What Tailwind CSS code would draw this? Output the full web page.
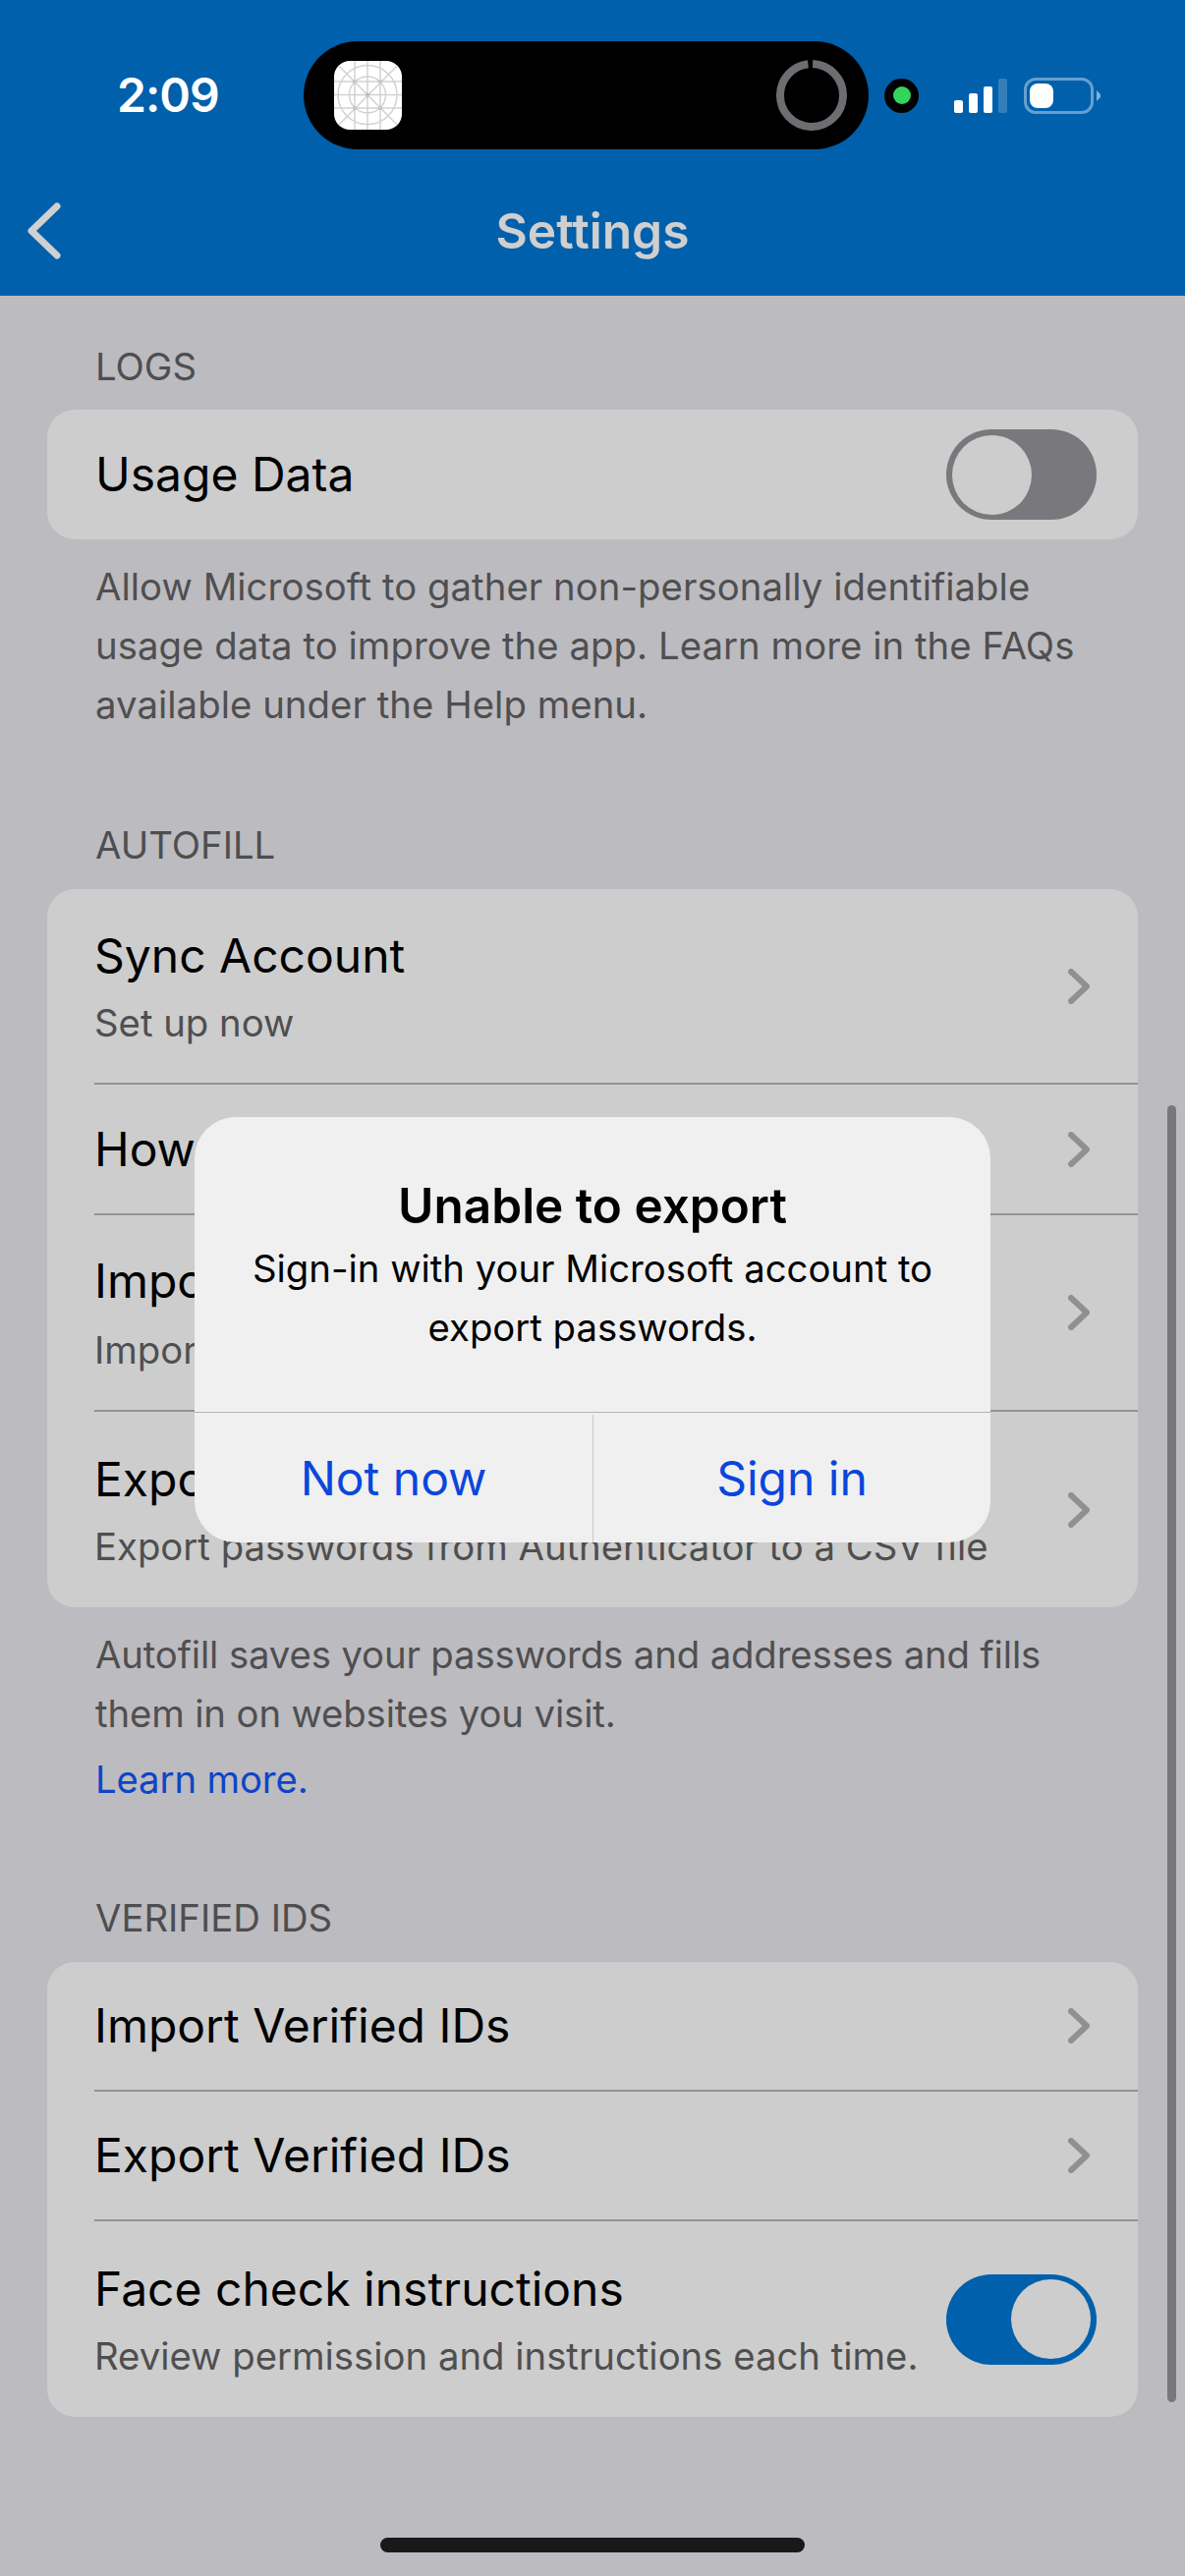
<!DOCTYPE html>
<html lang="en">
<head>
  <meta charset="UTF-8" />
  <meta name="viewport" content="width=device-width, initial-scale=1.0" />
  <title>Settings</title>
  <script src="https://cdn.jsdelivr.net/npm/@tailwindcss/browser@4"></script>
</head>
<body class="relative w-[1206px] h-[2622px] overflow-hidden bg-[#bcbbc0] font-['Inter',sans-serif] text-black">

  <!-- top bar -->
  <header class="h-[301px] bg-[#0060ac] pt-[42px]">
    <div class="flex items-center h-[110px]">
      <div class="w-[309px] pl-[119px] text-[48px] leading-none font-semibold text-white tracking-[-1px]">2:09</div>
      <div class="flex items-center justify-between w-[575px] h-[110px] rounded-full bg-black pl-[31px] pr-[22px]">
        <svg width="69" height="70" viewBox="0 0 69 70" class="rounded-[16px] bg-white" fill="none" stroke="#d2d2d2" stroke-width="1.500">
          <path d="M21 0V70M34 0V70M47 0V70M0 21H69M0 34.500H69M0 48H69M0 0L69 70M69 0L0 70" />
          <circle cx="34" cy="34.500" r="30" />
          <circle cx="34" cy="34.500" r="18.500" />
          <circle cx="34" cy="34.500" r="2" fill="#bdbdbd" stroke="none" />
          <circle cx="21" cy="21" r="2" fill="#c4c4c4" stroke="none" />
          <circle cx="47" cy="21" r="2" fill="#c4c4c4" stroke="none" />
          <circle cx="21" cy="48" r="2" fill="#c4c4c4" stroke="none" />
          <circle cx="47" cy="48" r="2" fill="#c4c4c4" stroke="none" />
        </svg>
        <svg width="72" height="72" viewBox="0 0 72 72" fill="none">
          <circle cx="36" cy="36" r="32" stroke="#6e6e72" stroke-width="8" stroke-dasharray="196 5" transform="rotate(-88 36 36)" />
        </svg>
      </div>
      <div class="flex items-center justify-center w-[35px] h-[35px] ml-[16px] rounded-full bg-black">
        <div class="w-[18px] h-[18px] rounded-full bg-[#32d65a]"></div>
      </div>
      <div class="flex items-end gap-[6px] h-[35px] ml-[36px]">
        <div class="w-[9px] h-[13px] rounded-[2px] bg-white"></div>
        <div class="w-[9px] h-[20px] rounded-[2px] bg-white"></div>
        <div class="w-[9px] h-[27px] rounded-[2px] bg-white"></div>
        <div class="w-[9px] h-[35px] rounded-[2px] bg-white/20"></div>
      </div>
      <div class="flex items-center w-[71px] h-[37px] ml-[17px] p-[3px] rounded-[12px] border-[3px] border-white/40">
        <div class="w-[24px] h-[25px] rounded-[8px] bg-white"></div>
      </div>
      <svg width="4" height="11" viewBox="0 0 4 11" class="ml-[3px]"><path d="M0 0L4 4V7L0 11Z" fill="#ffffff" fill-opacity="0.5" /></svg>
    </div>
    <nav class="relative flex items-center justify-center h-[149px] pt-[18px]">
      <svg width="34" height="58" viewBox="0 0 34 58" fill="none" class="absolute left-[28px] top-[54px]">
        <path d="M30 4L4 29L30 54" stroke="#d0d0d0" stroke-width="7" stroke-linecap="round" stroke-linejoin="round" />
      </svg>
      <h1 class="text-[49.700px] leading-none font-semibold text-[#cfcfcf]">Settings</h1>
    </nav>
  </header>

  <main class="px-[48px] pt-[50px]">
    <h2 class="px-[49px] h-[40px] leading-[44px] text-[38.300px] text-[#4e4e50]">LOGS</h2>
    <section class="flex items-center justify-between h-[132px] mt-[26px] pl-[49px] pr-[42px] rounded-[28px] bg-[#cdcdcd]">
      <span class="text-[48px]">Usage Data</span>
      <div class="flex items-center w-[153px] h-[92px] pl-[6px] rounded-full bg-[#78787d]">
        <div class="w-[81px] h-[81px] rounded-full bg-[#cdcdcd]"></div>
      </div>
    </section>
    <p class="mt-[18px] px-[49px] text-[38.300px] leading-[60px] tracking-[0.05px] text-[#4f4f50]">Allow Microsoft to gather non-personally identifiable<br />usage data to improve the app. Learn more in the FAQs<br />available under the Help menu.</p>

    <h2 class="mt-[91px] px-[49px] h-[40px] leading-[44px] text-[38.300px] text-[#4e4e50]">AUTOFILL</h2>
    <section class="mt-[27px] pl-[48px] rounded-[28px] bg-[#cdcdcd]">
      <div class="flex items-center justify-between h-[199px] pr-[49px] border-b-2 border-[#929292]">
        <div class="pt-[6px]">
          <div class="text-[48px] leading-[60px]">Sync Account</div>
          <div class="mt-[8px] text-[38.300px] leading-[60px] text-[#4f4f50]">Set up now</div>
        </div>
        <svg width="22" height="36" viewBox="0 0 22 36" fill="none"><path d="M3 3L19 18L3 33" stroke="#909090" stroke-width="6" stroke-linecap="round" stroke-linejoin="round" /></svg>
      </div>
      <div class="flex items-center justify-between h-[133px] pr-[49px] border-b-2 border-[#929292]">
        <div class="text-[48px] leading-[60px]">How to turn on Autofill</div>
        <svg width="22" height="36" viewBox="0 0 22 36" fill="none"><path d="M3 3L19 18L3 33" stroke="#909090" stroke-width="6" stroke-linecap="round" stroke-linejoin="round" /></svg>
      </div>
      <div class="flex items-center justify-between h-[200px] pr-[49px] border-b-2 border-[#929292]">
        <div class="pt-[6px]">
          <div class="text-[48px] leading-[60px]">Import Passwords</div>
          <div class="mt-[10px] text-[38.300px] leading-[60px] text-[#4f4f50]">Import passwords from Chrome and other apps</div>
        </div>
        <svg width="22" height="36" viewBox="0 0 22 36" fill="none"><path d="M3 3L19 18L3 33" stroke="#909090" stroke-width="6" stroke-linecap="round" stroke-linejoin="round" /></svg>
      </div>
      <div class="flex items-center justify-between h-[199px] pr-[49px]">
        <div class="pt-[6px]">
          <div class="text-[48px] leading-[60px]">Export Passwords</div>
          <div class="mt-[8px] text-[38.300px] leading-[60px] text-[#4f4f50]">Export passwords from Authenticator to a CSV file</div>
        </div>
        <svg width="22" height="36" viewBox="0 0 22 36" fill="none"><path d="M3 3L19 18L3 33" stroke="#909090" stroke-width="6" stroke-linecap="round" stroke-linejoin="round" /></svg>
      </div>
    </section>
    <p class="mt-[18px] px-[49px] text-[38.300px] leading-[60px] tracking-[-0.120px] text-[#4f4f50]">Autofill saves your passwords and addresses and fills<br />them in on websites you visit.</p>
    <a class="block mt-[7px] px-[49px] text-[38.300px] leading-[60px] tracking-[-0.120px] text-[#0f45c4]">Learn more.</a>

    <h2 class="mt-[91px] px-[49px] h-[40px] leading-[40px] text-[38.300px] text-[#4e4e50]">VERIFIED IDS</h2>
    <section class="mt-[25px] pl-[48px] rounded-[28px] bg-[#cdcdcd]">
      <div class="flex items-center justify-between h-[132px] pr-[49px] border-b-2 border-[#929292]">
        <div class="text-[48px] leading-[60px]">Import Verified IDs</div>
        <svg width="22" height="36" viewBox="0 0 22 36" fill="none"><path d="M3 3L19 18L3 33" stroke="#909090" stroke-width="6" stroke-linecap="round" stroke-linejoin="round" /></svg>
      </div>
      <div class="flex items-center justify-between h-[132px] pr-[49px] border-b-2 border-[#929292]">
        <div class="text-[48px] leading-[60px]">Export Verified IDs</div>
        <svg width="22" height="36" viewBox="0 0 22 36" fill="none"><path d="M3 3L19 18L3 33" stroke="#909090" stroke-width="6" stroke-linecap="round" stroke-linejoin="round" /></svg>
      </div>
      <div class="flex items-center justify-between h-[199px] pr-[42px]">
        <div class="pt-[6px]">
          <div class="text-[48px] leading-[60px]">Face check instructions</div>
          <div class="mt-[8px] text-[38.300px] leading-[60px] text-[#4f4f50]">Review permission and instructions each time.</div>
        </div>
        <div class="flex items-center justify-end w-[153px] h-[92px] pr-[6px] rounded-full bg-[#0060ac]">
          <div class="w-[81px] h-[81px] rounded-full bg-[#cdcdcd]"></div>
        </div>
      </div>
    </section>
  </main>

  <!-- scroll indicator -->
  <div class="absolute left-[1188px] top-[1125px] w-[9px] h-[1320px] rounded-full bg-[#78787b]"></div>

  <!-- home indicator -->
  <div class="absolute left-[387px] top-[2583px] w-[432px] h-[15px] rounded-full bg-[#191919]"></div>

  <!-- alert -->
  <div class="absolute left-[198px] top-[1137px] flex flex-col w-[810px] h-[433px] rounded-[42px] bg-[#f0f0f0] overflow-hidden text-center">
    <div class="h-[300px] pt-[60px]">
      <div class="text-[49.500px] leading-[60px] font-semibold">Unable to export</div>
      <p class="mt-[4px] text-[38.300px] leading-[60px]">Sign-in with your Microsoft account to<br />export passwords.</p>
    </div>
    <div class="flex flex-1 pt-[2px] border-t border-[#b4b4b6] text-[48px] text-[#0a46dc]">
      <button class="w-[406px] border-r border-[#c8c8ca]">Not now</button>
      <button class="flex-1">Sign in</button>
    </div>
  </div>
</body>
</html>
